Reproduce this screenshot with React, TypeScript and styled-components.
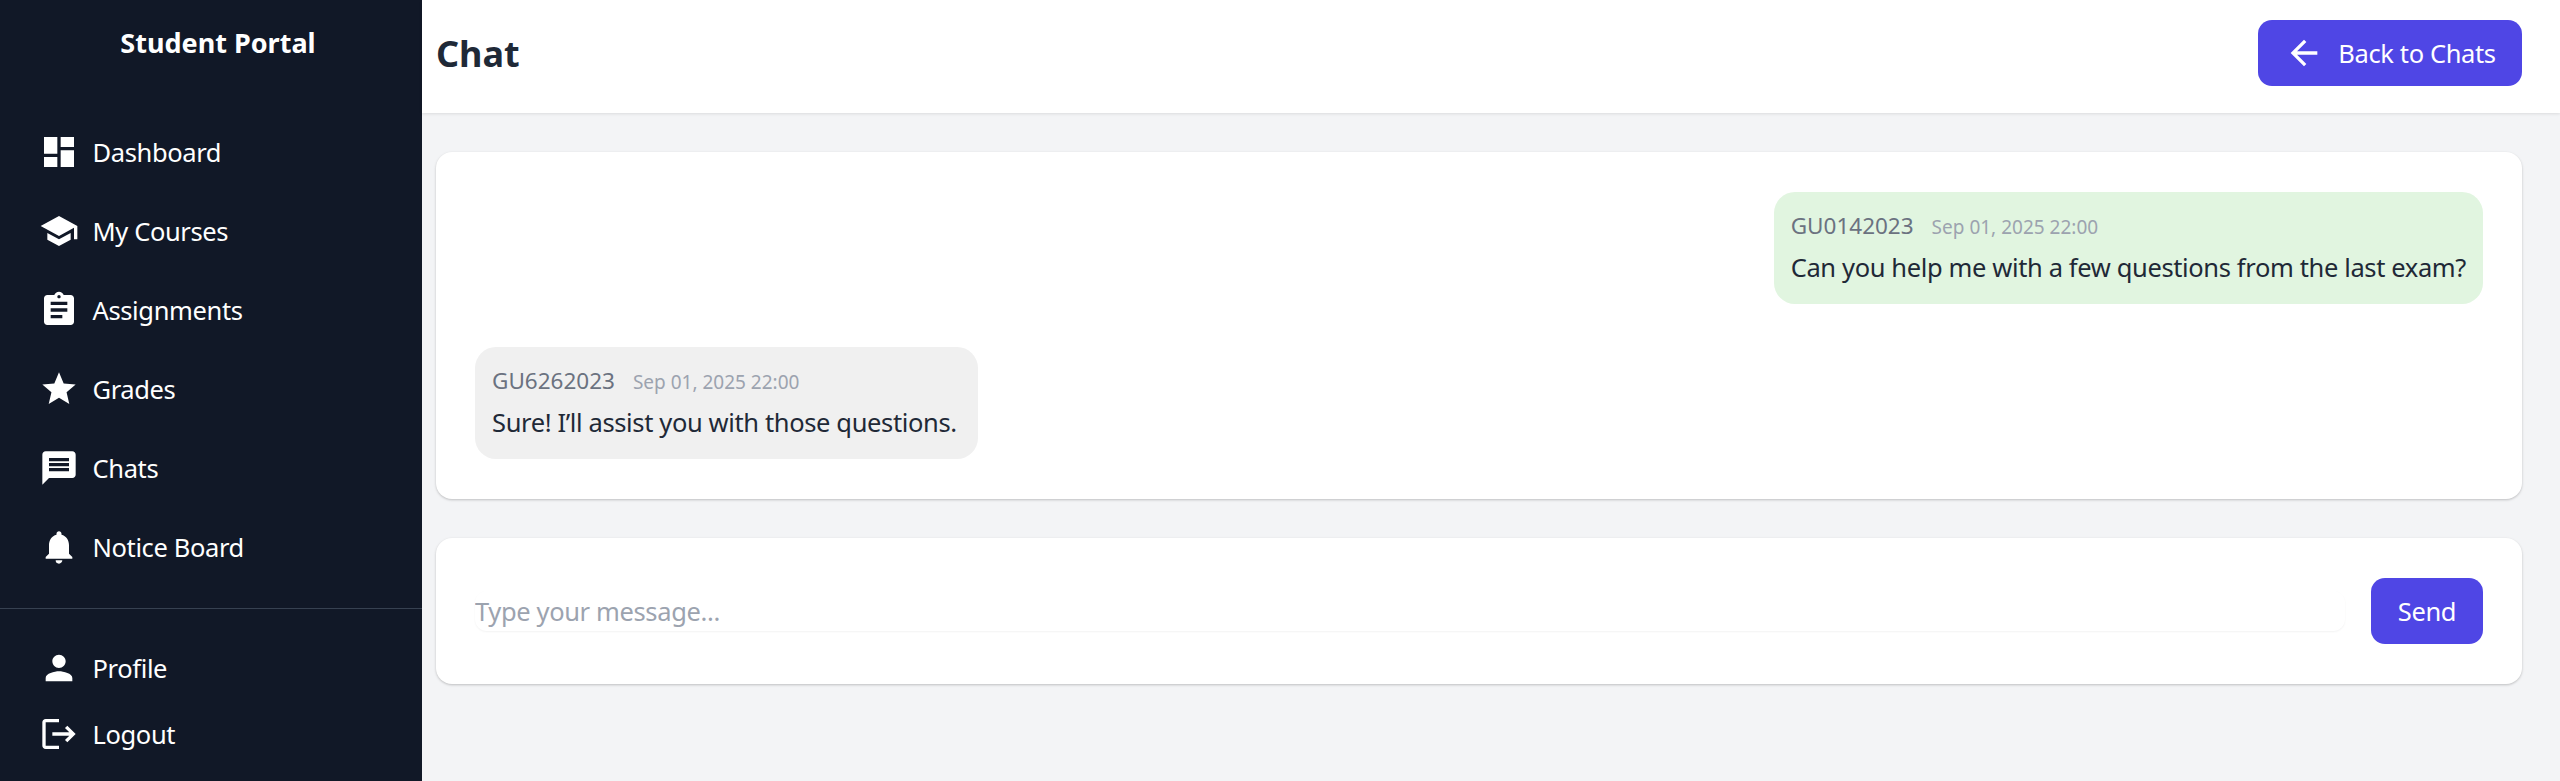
import React from "react";
import styled, { createGlobalStyle } from "styled-components";
import { MdDashboard, MdSchool, MdAssignment, MdStar, MdMessage, MdNotifications, MdPerson, MdLogout, MdArrowBack } from "react-icons/md";

const Global = createGlobalStyle`
  html, body, #root { margin: 0; height: 100%; }
  body { font-family: "Noto Sans", "Open Sans", sans-serif; background: #f3f4f6; overflow: hidden; }
  * { box-sizing: border-box; }
`;
const Layout = styled.div`display: flex; height: 781px;`;
const Sidebar = styled.aside`
  width: 422px; flex: none; background: #111827; color: #fff; display: flex; flex-direction: column;
`;
const Brand = styled.h1`
  margin: 0; height: 87px; line-height: 85px; padding-left: 14px; text-align: center; font-size: 27px; font-weight: 700;
`;
const Nav = styled.nav`
  display: flex; flex-direction: column; padding-top: 26px; height: 522px; border-bottom: 1px solid #374151;
`;
const Footer = styled.div`display: flex; flex-direction: column; padding-top: 26px;`;
const Item = styled.a<{ $h: number }>`
  display: flex; align-items: center; gap: 13.5px; padding: 0 0 1px 39px; height: ${p => p.$h}px;
  font-size: 25.5px; letter-spacing: -0.37px; color: #fff;
  svg { width: 40px; height: 40px; flex: none; }
`;
const Main = styled.main`flex: 1; min-width: 0; display: flex; flex-direction: column;`;
const Header = styled.header`
  height: 113px; flex: none; background: #fff; display: flex; align-items: center; justify-content: space-between;
  padding: 0 38px 7px 14px; box-shadow: 0 1px 3px rgba(0,0,0,.1);
`;
const Title = styled.h2`margin: 0; font-size: 36px; font-weight: 700; color: #1f2937;`;
const Primary = styled.button`
  height: 66px; display: inline-flex; align-items: center; justify-content: center; gap: 14px; border: 0; border-radius: 14px;
  background: #4f46e5; color: #fff; font: inherit; font-size: 25.5px; letter-spacing: -0.37px;
  svg { width: 40px; height: 40px; }
`;
const BackButton = styled(Primary)`width: 264px;`;
const SendButton = styled(Primary)`width: 112px; flex: none;`;
const Content = styled.div`padding: 39px 38px 0 14px; display: flex; flex-direction: column; gap: 39px;`;
const Card = styled.section`background: #fff; border-radius: 16px; box-shadow: 0 1px 3px rgba(0,0,0,.15), 0 1px 2px rgba(0,0,0,.08); padding: 40px 39px;`;
const Messages = styled(Card)`display: flex; flex-direction: column; gap: 43px; height: 347px;`;
const Bubble = styled.div<{ $mine?: boolean }>`
  height: 112px; min-width: 503px; padding: 0 17px 2px; border-radius: 21px; align-self: ${p => p.$mine ? "flex-end" : "flex-start"};
  background: ${p => p.$mine ? "#e1f5e0" : "#f0f0f0"}; display: flex; flex-direction: column; justify-content: center; gap: 9px;
`;
const Meta = styled.div`display: flex; align-items: baseline; gap: 18px;`;
const Sender = styled.span`font-size: 22.5px; color: #6b7280;`;
const Time = styled.span`font-size: 19px; color: #9ca3af;`;
const Body = styled.div`font-size: 25.5px; letter-spacing: -0.37px; color: #1f2937;`;
const Composer = styled(Card)`display: flex; align-items: center; gap: 26px; height: 146px;`;
const Input = styled.input`
  flex: 1; height: 40px; border: 0; outline: 0; padding: 0; border-radius: 12px; background: #fff; font: inherit; font-size: 25.5px; letter-spacing: -0.37px;
  box-shadow: 0 1px 2px rgba(0,0,0,.05);
  &::placeholder { color: #9ca3af; opacity: 1; }
`;

const nav = [
  [MdDashboard, "Dashboard"], [MdSchool, "My Courses"], [MdAssignment, "Assignments"],
  [MdStar, "Grades"], [MdMessage, "Chats"], [MdNotifications, "Notice Board"],
] as const;

export default function App() {
  return (
    <Layout>
      <Global />
      <Sidebar>
        <Brand>Student Portal</Brand>
        <Nav>{nav.map(([I, t]) => <Item key={t} $h={79}><I />{t}</Item>)}</Nav>
        <Footer>
          <Item $h={66}><MdPerson />Profile</Item>
          <Item $h={66}><MdLogout />Logout</Item>
        </Footer>
      </Sidebar>
      <Main>
        <Header>
          <Title>Chat</Title>
          <BackButton><MdArrowBack />Back to Chats</BackButton>
        </Header>
        <Content>
          <Messages>
            <Bubble $mine>
              <Meta><Sender>GU0142023</Sender><Time>Sep 01, 2025 22:00</Time></Meta>
              <Body>Can you help me with a few questions from the last exam?</Body>
            </Bubble>
            <Bubble>
              <Meta><Sender>GU6262023</Sender><Time>Sep 01, 2025 22:00</Time></Meta>
              <Body>Sure! I’ll assist you with those questions.</Body>
            </Bubble>
          </Messages>
          <Composer>
            <Input placeholder="Type your message..." />
            <SendButton>Send</SendButton>
          </Composer>
        </Content>
      </Main>
    </Layout>
  );
}
